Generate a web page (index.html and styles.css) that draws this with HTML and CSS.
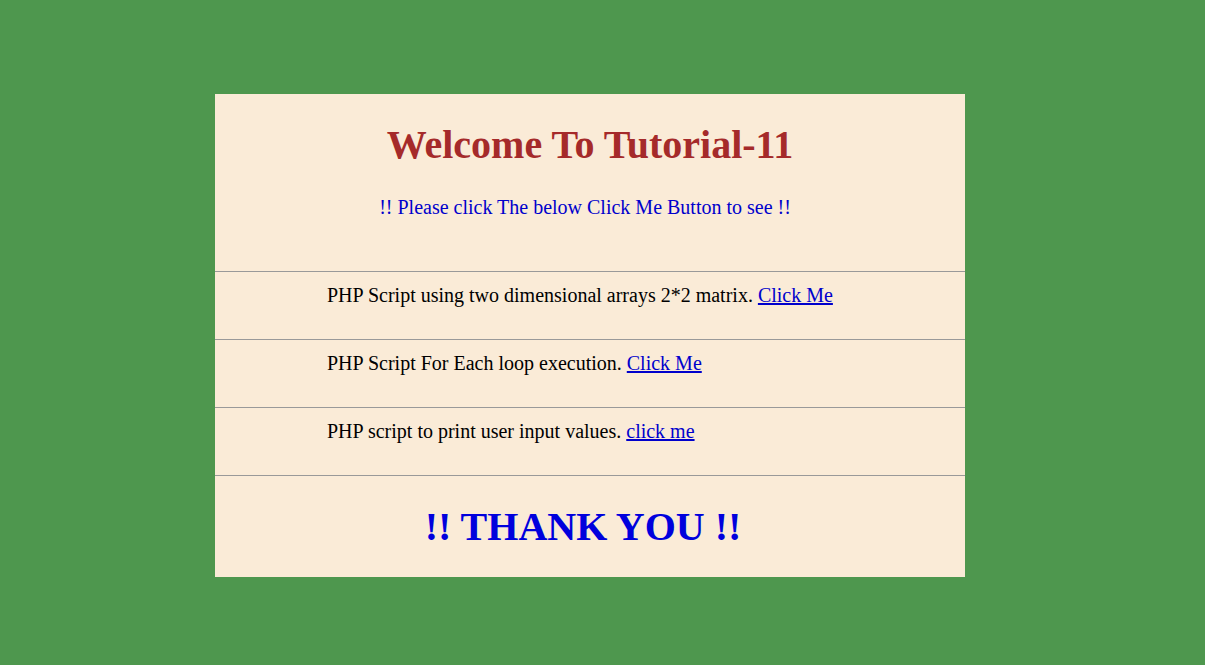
FILE: index.html
```html
<!DOCTYPE html>
<html>
<head>
<meta charset="utf-8">
<link rel="stylesheet" href="styles.css">
</head>
<body>
<div class="card">
  <div class="head">
    <h1 class="title">Welcome To Tutorial-11</h1>
    <p class="sub">!! Please click The below Click Me Button to see !!</p>
  </div>
  <div class="row">PHP Script using two dimensional arrays 2*2 matrix. <a href="#">Click Me</a></div>
  <div class="row">PHP Script For Each loop execution. <a href="#">Click Me</a></div>
  <div class="row">PHP script to print user input values. <a href="#">click me</a></div>
  <div class="foot">!! THANK YOU !!</div>
</div>
</body>
</html>
```
FILE: styles.css
```css
html, body {
  margin: 0;
  padding: 0;
  background: #4e974e;
  font-family: "Liberation Serif", "Times New Roman", serif;
}
.card {
  width: 750px;
  margin: 94px 0 0 215px;
  background: #faebd7;
}
.head {
  height: 177px;
  text-align: center;
  overflow: hidden;
}
.title {
  margin: 0;
  padding-top: 28px;
  font-size: 40px;
  line-height: 46px;
  font-weight: bold;
  color: #a52a2a;
}
.sub {
  margin: 28px 0 0;
  padding-right: 10px;
  font-size: 20px;
  line-height: 23px;
  color: #0000cc;
}
.row {
  height: 67px;
  border-top: 1px solid #999999;
  padding-left: 112px;
  font-size: 20px;
  line-height: 46px;
  color: #000;
}
.row a {
  color: #0000cc;
  text-decoration: underline;
}
.foot {
  border-top: 1px solid #999999;
  height: 101px;
  text-align: center;
  padding-right: 14px;
  font-size: 40px;
  font-weight: bold;
  line-height: 101px;
  color: #0000dd;
}
```
